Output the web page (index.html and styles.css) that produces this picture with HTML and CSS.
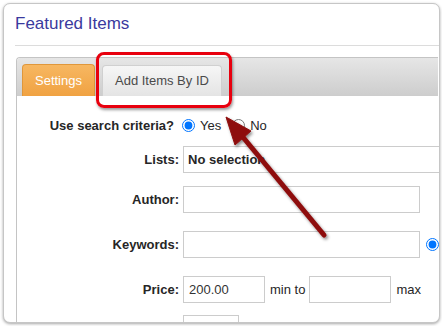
FILE: index.html
```html
<!DOCTYPE html>
<html lang="en">
<head>
    <meta charset="UTF-8">
    <meta name="viewport" content="width=device-width, initial-scale=1.0">
    <title>Featured Items</title>
    <link rel="stylesheet" href="styles.css">
</head>
<body>
    <div class="frame">
        <h2 class="page-title">Featured Items</h2>

        <div class="tabs">
            <div class="tab-bar">
                <div class="tab tab-active">Settings</div>
                <div class="tab">Add Items By ID</div>
            </div>

            <div class="tab-content">
                <div class="row row-radio">
                    <label class="field-label">Use search criteria?</label>
                    <div class="field">
                        <input type="radio" name="criteria" class="radio" checked>
                        <span class="radio-text">Yes</span>
                        <input type="radio" name="criteria" class="radio radio-second">
                        <span class="radio-text">No</span>
                    </div>
                </div>

                <div class="row row-lists">
                    <label class="field-label">Lists:</label>
                    <div class="field">
                        <div class="select-box">No selection</div>
                    </div>
                </div>

                <div class="row row-author">
                    <label class="field-label">Author:</label>
                    <div class="field">
                        <input type="text" class="text-input wide">
                    </div>
                </div>

                <div class="row row-keywords">
                    <label class="field-label">Keywords:</label>
                    <div class="field">
                        <input type="text" class="text-input wide">
                        <input type="radio" name="kw" class="radio radio-side" checked>
                    </div>
                </div>

                <div class="row row-price">
                    <label class="field-label">Price:</label>
                    <div class="field">
                        <input type="text" class="text-input price" value="200.00">
                        <span class="unit">min to</span>
                        <input type="text" class="text-input price">
                        <span class="unit">max</span>
                    </div>
                </div>

                <div class="row row-next">
                    <label class="field-label"></label>
                    <div class="field">
                        <input type="text" class="text-input small">
                    </div>
                </div>
            </div>
        </div>
    </div>

    <!-- annotation overlays -->
    <div class="highlight-box"></div>
    <svg class="arrow" width="442" height="326" viewBox="0 0 442 326">
        <defs>
            <filter id="shadow" x="-20%" y="-20%" width="140%" height="140%">
                <feDropShadow dx="1.5" dy="2" stdDeviation="1.5" flood-color="#000" flood-opacity="0.45"/>
            </filter>
        </defs>
        <g filter="url(#shadow)" fill="#8e0b0b" stroke="#8e0b0b">
            <line x1="242" y1="136" x2="324" y2="235" stroke-width="5" stroke-linecap="round"/>
            <polygon points="226,117 235,145 251,131" stroke-width="1" stroke-linejoin="round"/>
        </g>
    </svg>
</body>
</html>
```

FILE: styles.css
```css
body {
    margin: 0;
    font-family: 'Liberation Sans', Arial, sans-serif;
    font-size: 13px;
    color: #333;
    background: #ffffff;
    height: 326px;
    overflow: hidden;
    position: relative;
}

.frame {
    margin: 3px 2px 0 3px;
    height: 318px;
    border: 1px solid #c6c6c6;
    border-radius: 7px;
    background: #ffffff;
    box-shadow: 0 1px 3px rgba(0, 0, 0, 0.35);
    overflow: hidden;
}

.page-title {
    margin: 0 0 0 11px;
    padding: 10px 0 11px 0;
    font-size: 17px;
    line-height: 20px;
    font-weight: normal;
    color: #3a3a9e;
    border-bottom: 1px solid #dcdcdc;
}

.tabs {
    margin: 11px 1px 0 12px;
    border-top: 1px solid #c4c4c4;
    border-left: 1px solid #c4c4c4;
    border-radius: 4px 0 0 0;
}

.tab-bar {
    display: flex;
    align-items: flex-end;
    gap: 7px;
    height: 38px;
    padding-left: 5px;
    background: linear-gradient(to bottom, #e6e6e6, #cdcdcd);
    border-radius: 3px 0 0 0;
}

.tab {
    height: 30px;
    line-height: 30px;
    padding: 0 12px;
    border: 1px solid #d0d0d0;
    border-bottom: none;
    border-radius: 4px 4px 0 0;
    background: linear-gradient(to bottom, #f6f6f6, #e4e4e4);
    color: #4a4a4a;
    font-size: 13px;
}

.tab-active {
    height: 31px;
    line-height: 31px;
    border-color: #e0973a;
    background: linear-gradient(to bottom, #f7b761, #f0a242);
    color: #ffffff;
}

.tab-content {
    padding-top: 19px;
}

.row {
    display: flex;
    align-items: center;
}

.field-label {
    width: 162px;
    flex-shrink: 0;
    text-align: right;
    font-weight: bold;
    color: #262626;
    margin-right: 4px;
}

.field {
    display: flex;
    align-items: center;
    white-space: nowrap;
}

.row-radio {
    height: 20px;
}

.row-radio .field-label {
    width: 157px;
    margin-right: 8px;
}

.row-lists {
    margin-top: 11px;
}

.row-author {
    margin-top: 13px;
}

.row-keywords {
    margin-top: 18px;
}

.row-price {
    margin-top: 18px;
}

.row-next {
    margin-top: 12px;
}

.radio {
    width: 13px;
    height: 13px;
    margin: 0 5px 0 0;
}

.radio-second {
    margin-left: 11px;
}

.radio-side {
    margin-left: 6px;
}

.radio-text {
    color: #262626;
}

.select-box {
    width: 280px;
    height: 25px;
    line-height: 25px;
    padding-left: 4px;
    border: 1px solid #cccccc;
    font-weight: bold;
    color: #262626;
}

.text-input {
    box-sizing: border-box;
    height: 27px;
    margin: 0;
    padding: 0 5px;
    border: 1px solid #cccccc;
    font-family: 'Liberation Sans', Arial, sans-serif;
    font-size: 13px;
    color: #333;
    outline: none;
}

.wide {
    width: 237px;
}

.price {
    width: 82px;
}

.small {
    width: 56px;
}

.unit {
    margin: 0 4px 0 5px;
    color: #262626;
}

.highlight-box {
    position: absolute;
    left: 96px;
    top: 52px;
    width: 130px;
    height: 50px;
    border: 3px solid #e8000e;
    border-radius: 8px;
    box-shadow: 1px 2px 3px rgba(0, 0, 0, 0.4);
}

.arrow {
    position: absolute;
    left: 0;
    top: 0;
}
```
